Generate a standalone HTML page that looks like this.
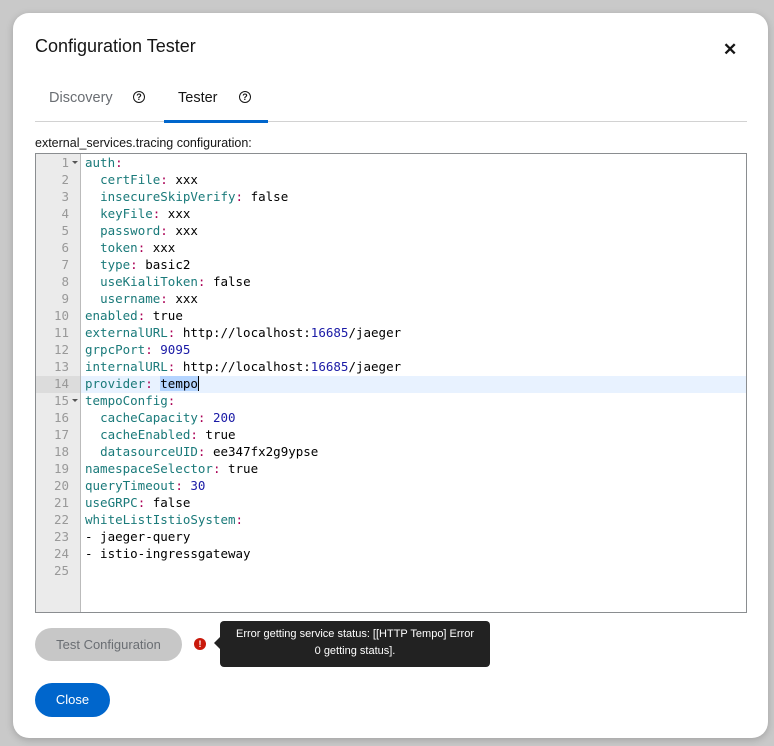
<!DOCTYPE html>
<html><head><style>
body{margin:0;width:774px;height:746px;background:#c9c9c9;position:relative;overflow:hidden;font-family:"Liberation Sans",sans-serif}
.modal{position:absolute;left:13px;top:13px;width:755px;height:725px;background:#fff;border-radius:16px;box-shadow:0 2px 8px rgba(0,0,0,.2)}
.title{position:absolute;left:22px;top:23px;font-size:18px;color:#151515}
.x{position:absolute;left:710px;top:27px;font-size:17px;font-weight:bold;color:#151515}
.tabs{position:absolute;left:22px;top:108px;width:712px;height:1px;background:#d2d2d2}
.tab{position:absolute;top:77px;font-size:14.5px;color:#6a6e73}
.q{position:absolute;top:78px;width:10px;height:10px;border:1.6px solid #151515;border-radius:50%;font-size:9px;font-weight:bold;text-align:center;line-height:10px;color:#151515}
.active{position:absolute;left:151px;top:107px;width:104px;height:3px;background:#06c}
.lbl{position:absolute;left:22px;top:123px;font-size:12.5px;color:#151515}
.ed{position:absolute;left:22px;top:140px;width:710px;height:458px;border:1px solid #8a8d90;background:#fff;overflow:hidden}
.gut{position:absolute;left:0;top:0;width:44px;height:100%;background:#ebebeb;border-right:1px solid #bbb}
.ln{position:absolute;left:0;width:33px;text-align:right;color:#999;font:12.5px/17px "DejaVu Sans Mono",monospace}
.code{position:absolute;left:49px;top:0;font:12.5px/17px "DejaVu Sans Mono",monospace;color:#000;white-space:pre}
.k{color:#1a7a7a}.p{color:#a05}.n{color:#1a1aa6}
.hl{position:absolute;left:45px;width:665px;height:17px;background:#e8f2ff}
.fold{position:absolute;left:36px;width:0;height:0;border-left:3px solid transparent;border-right:3px solid transparent;border-top:3px solid #555}
.btn{position:absolute;left:22px;top:615px;width:147px;height:33px;border-radius:17px;background:#c7c7c7;color:#6a6e73;font-size:13px;text-align:center;line-height:33px}
.close{position:absolute;left:22px;top:670px;width:75px;height:34px;border-radius:17px;background:#06c;color:#fff;font-size:13px;text-align:center;line-height:34px}
.tip{position:absolute;left:207px;top:608px;width:270px;height:46px;background:#222;border-radius:4px;color:#fff;font-size:11px;text-align:center;line-height:17px;padding-top:5px;box-sizing:border-box}
.tip:before{content:"";position:absolute;left:-6px;top:16px;border:6px solid transparent;border-left:0;border-right-color:#222}
.err{position:absolute;left:181px;top:625px;width:12px;height:12px;border-radius:50%;background:#c9190b;color:#fff;font-size:9px;font-weight:bold;text-align:center;line-height:12px}
</style></head><body>
<div class="modal">
<div class="title">Configuration Tester</div>
<div class="x">✕</div>
<div class="tab" style="left:36px">Discovery</div><div class="q" style="left:120px">?</div>
<div class="tab" style="left:165px;color:#151515">Tester</div><div class="q" style="left:226px">?</div>
<div class="tabs"></div><div class="active"></div>
<div class="lbl">external_services.tracing configuration:</div>
<div class="ed">
<div class="gut"></div>
<div class="hl" style="top:222px"></div>
<div style="position:absolute;left:0;top:222px;width:44px;height:17px;background:#dcdcdc"></div>
<div class="fold" style="top:7px"></div><div class="fold" style="top:245px"></div>
<div class="ln" style="top:0">1<br>2<br>3<br>4<br>5<br>6<br>7<br>8<br>9<br>10<br>11<br>12<br>13<br>14<br>15<br>16<br>17<br>18<br>19<br>20<br>21<br>22<br>23<br>24<br>25</div>
<div class="code"><span class="k">auth</span><span class="p">:</span>
  <span class="k">certFile</span><span class="p">:</span> xxx
  <span class="k">insecureSkipVerify</span><span class="p">:</span> false
  <span class="k">keyFile</span><span class="p">:</span> xxx
  <span class="k">password</span><span class="p">:</span> xxx
  <span class="k">token</span><span class="p">:</span> xxx
  <span class="k">type</span><span class="p">:</span> basic2
  <span class="k">useKialiToken</span><span class="p">:</span> false
  <span class="k">username</span><span class="p">:</span> xxx
<span class="k">enabled</span><span class="p">:</span> true
<span class="k">externalURL</span><span class="p">:</span> http://localhost:<span class="n">16685</span>/jaeger
<span class="k">grpcPort</span><span class="p">:</span> <span class="n">9095</span>
<span class="k">internalURL</span><span class="p">:</span> http://localhost:<span class="n">16685</span>/jaeger
<span class="k">provider</span><span class="p">:</span> <span style="background:#b5d5ff;border-right:1px solid #000">tempo</span>
<span class="k">tempoConfig</span><span class="p">:</span>
  <span class="k">cacheCapacity</span><span class="p">:</span> <span class="n">200</span>
  <span class="k">cacheEnabled</span><span class="p">:</span> true
  <span class="k">datasourceUID</span><span class="p">:</span> ee347fx2g9ypse
<span class="k">namespaceSelector</span><span class="p">:</span> true
<span class="k">queryTimeout</span><span class="p">:</span> <span class="n">30</span>
<span class="k">useGRPC</span><span class="p">:</span> false
<span class="k">whiteListIstioSystem</span><span class="p">:</span>
- jaeger-query
- istio-ingressgateway
</div>
</div>
<div class="btn">Test Configuration</div>
<div class="err">!</div>
<div class="tip">Error getting service status: [[HTTP Tempo] Error<br>0 getting status].</div>
<div class="close">Close</div>
</div>
</body></html>
